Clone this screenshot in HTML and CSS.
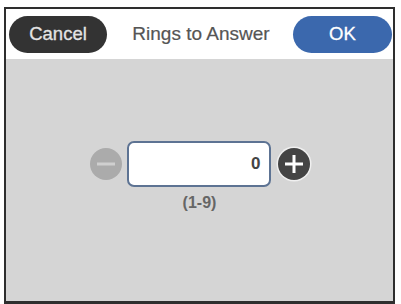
FILE: index.html
```html
<!DOCTYPE html>
<html>
<head>
<meta charset="utf-8">
<link rel="stylesheet" href="styles.css">
</head>
<body>
<div class="frame">
  <div class="header">
    <div class="btn btn-cancel">Cancel</div>
    <div class="title">Rings to Answer</div>
    <div class="btn btn-ok">OK</div>
  </div>
  <div class="content">
    <div class="stepper">
      <div class="circle minus">
        <svg width="32" height="32" viewBox="0 0 32 32"><rect x="7" y="14.5" width="18" height="3" fill="#cfcfcf"/></svg>
      </div>
      <div class="field">0</div>
      <div class="circle plus">
        <svg width="32" height="32" viewBox="0 0 32 32"><rect x="7" y="14.5" width="18" height="3" fill="#fff"/><rect x="14.5" y="7" width="3" height="18" fill="#fff"/></svg>
      </div>
    </div>
    <div class="range">(1-9)</div>
  </div>
</div>
</body>
</html>
```
FILE: styles.css
```css
html, body {
  margin: 0;
  padding: 0;
  background: #fff;
}
body {
  font-family: "Liberation Sans", Arial, sans-serif;
  width: 401px;
  height: 304px;
  overflow: hidden;
}
.frame {
  margin: 7px 0 0 4px;
  width: 387px;
  height: 292px;
  border: 2px solid #2e2e2e;
  border-bottom-width: 3px;
  display: flex;
  flex-direction: column;
  background: #d5d5d5;
}
.header {
  height: 50px;
  background: #fff;
  display: flex;
  align-items: center;
  justify-content: space-between;
  padding: 0 1px 0 3px;
}
.btn {
  height: 37px;
  border-radius: 19px;
  display: flex;
  align-items: center;
  justify-content: center;
  font-size: 18.5px;
  color: #fff;
  -webkit-text-stroke: 0.3px currentColor;
}
.btn-cancel {
  width: 98px;
  background: #333;
  color: #e4e4e4;
}
.btn-ok {
  width: 99px;
  background: #3b68ad;
}
.title {
  font-size: 19px;
  color: #555;
  margin-left: 2px;
  -webkit-text-stroke: 0.2px currentColor;
}
.content {
  flex: 1;
  display: flex;
  flex-direction: column;
  align-items: center;
  padding-top: 82px;
}
.stepper {
  display: flex;
  align-items: center;
  gap: 5px;
  margin-left: 0;
}
.circle {
  width: 32px;
  height: 32px;
  border-radius: 50%;
  display: flex;
}
.minus {
  background: #ababab;
}
.plus {
  background: #444;
  box-shadow: 0 0 0 1.5px #f0f0f0;
  margin-left: 2px;
}
.field {
  width: 132px;
  height: 42px;
  border: 2px solid #5d7393;
  border-radius: 7px;
  background: #fff;
  display: flex;
  align-items: center;
  justify-content: flex-end;
  padding-right: 8px;
  font-size: 17px;
  font-weight: bold;
  color: #444;
}
.range {
  margin-top: 7px;
  font-size: 16px;
  font-weight: bold;
  color: #666;
}
```
